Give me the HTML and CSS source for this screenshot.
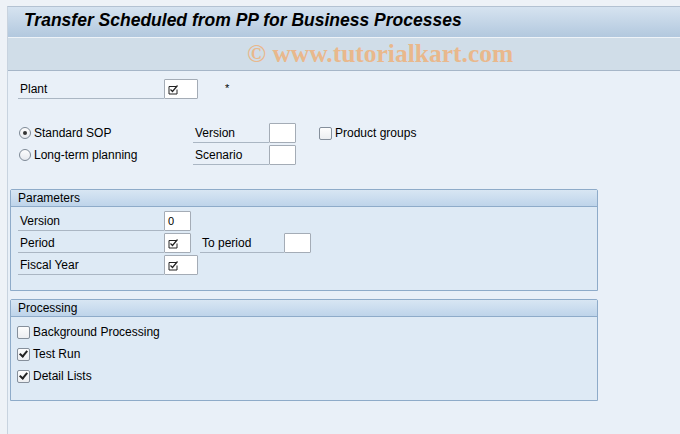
FILE: index.html
```html
<!DOCTYPE html>
<html lang="en">
<head>
  <meta charset="UTF-8" />
  <title>Transfer Scheduled from PP for Business Processes</title>
  <link rel="stylesheet" href="styles.css">
</head>
<body>
  <div class="ventana">
    <div class="titulo">Transfer Scheduled from PP for Business Processes</div>
    <div class="barra"><span class="marca">© www.tutorialkart.com</span></div>

    <div class="contenido">
      <div class="fila fila-plant">
        <span class="lbl">Plant</span>
        <span class="fld ancho">
          <svg class="req" width="11" height="11" viewBox="0 0 11 11"><path d="M1 2.5h7M1 2.5v7.5h8v-4.5" fill="none" stroke="#222" stroke-width="1"/><path d="M2.5 5.5l2 2 5-6" fill="none" stroke="#222" stroke-width="1.2"/></svg>
        </span>
        <span class="ast">*</span>
      </div>

      <div class="bloque-sop">
        <div class="fila">
          <span class="opcion"><span class="radio on"></span>Standard SOP</span>
          <span class="lbl corto">Version</span>
          <span class="fld"></span>
          <span class="opcion suelta"><span class="check"></span>Product groups</span>
        </div>
        <div class="fila">
          <span class="opcion"><span class="radio"></span>Long-term planning</span>
          <span class="lbl corto">Scenario</span>
          <span class="fld"></span>
        </div>
      </div>

      <div class="grupo">
        <div class="grupo-cab">Parameters</div>
        <div class="grupo-cuerpo">
          <div class="fila">
            <span class="lbl">Version</span>
            <span class="fld valor">0</span>
          </div>
          <div class="fila">
            <span class="lbl">Period</span>
            <span class="fld">
              <svg class="req" width="11" height="11" viewBox="0 0 11 11"><path d="M1 2.5h7M1 2.5v7.5h8v-4.5" fill="none" stroke="#222" stroke-width="1"/><path d="M2.5 5.5l2 2 5-6" fill="none" stroke="#222" stroke-width="1.2"/></svg>
            </span>
            <span class="lbl hasta">To period</span>
            <span class="fld"></span>
          </div>
          <div class="fila">
            <span class="lbl">Fiscal Year</span>
            <span class="fld ancho">
              <svg class="req" width="11" height="11" viewBox="0 0 11 11"><path d="M1 2.5h7M1 2.5v7.5h8v-4.5" fill="none" stroke="#222" stroke-width="1"/><path d="M2.5 5.5l2 2 5-6" fill="none" stroke="#222" stroke-width="1.2"/></svg>
            </span>
          </div>
        </div>
      </div>

      <div class="grupo">
        <div class="grupo-cab">Processing</div>
        <div class="grupo-cuerpo procesos">
          <div class="fila"><span class="opcion"><span class="check"></span>Background Processing</span></div>
          <div class="fila"><span class="opcion"><span class="check on"></span>Test Run</span></div>
          <div class="fila"><span class="opcion"><span class="check on"></span>Detail Lists</span></div>
        </div>
      </div>
    </div>
  </div>
</body>
</html>
```

FILE: styles.css
```css
html, body {
  margin: 0;
  height: 100%;
}
body {
  font-family: "Liberation Sans", Arial, sans-serif;
  font-size: 12px;
  color: #000;
  background: #eef2f7;
  padding: 6px 0 0 7px;
  box-sizing: border-box;
  overflow: hidden;
}
.ventana {
  height: 100%;
  border-top: 1px solid #b4c2d2;
  border-left: 1px solid #c8d3df;
  background: #e9f0f8;
}
.titulo {
  height: 30px;
  line-height: 27px;
  padding-left: 16px;
  font-size: 17.5px;
  font-weight: bold;
  font-style: italic;
  background: linear-gradient(#d6e3f0, #b2c8de);
  border-bottom: 1px solid #eef3f8;
}
.barra {
  height: 32px;
  background: #d0dde8;
  border-bottom: 1px solid #a6b6c8;
  display: flex;
  align-items: center;
  padding-left: 239px;
}
.marca {
  font-family: "Liberation Serif", "Times New Roman", serif;
  font-weight: bold;
  font-size: 25.5px;
  color: #e9b88c;
}
.contenido {
  padding: 8px 0 0 2px;
}
.fila {
  display: flex;
  height: 20px;
  margin-bottom: 2px;
}
.fila-plant {
  margin-left: 8px;
  margin-bottom: 24px;
}
.lbl {
  width: 146px;
  padding-left: 2px;
  line-height: 20px;
  border-bottom: 1px solid #aab6c3;
  box-sizing: border-box;
}
.lbl.corto {
  width: 76px;
  padding-left: 2px;
}
.lbl.hasta {
  width: 84px;
  margin-left: 9px;
}
.fld {
  width: 27px;
  height: 20px;
  box-sizing: border-box;
  border: 1px solid #a4acb6;
  border-radius: 1px;
  background: #fff;
  display: flex;
  align-items: center;
  padding-left: 3px;
}
.fld.ancho {
  width: 34px;
}
.fld.valor {
  font-size: 11px;
}
.req {
  display: block;
}
.ast {
  margin-left: 27px;
  line-height: 18px;
  font-size: 11px;
}
.bloque-sop {
  margin-left: 9px;
  margin-bottom: 24px;
}
.bloque-sop .opcion {
  width: 174px;
}
.opcion {
  display: flex;
  align-items: center;
  gap: 3px;
  line-height: 20px;
}
.opcion.suelta {
  margin-left: 23px;
}
.radio {
  width: 10px;
  height: 10px;
  border: 1px solid #7e8996;
  border-radius: 50%;
  background: linear-gradient(#fdfdfd, #e6e9ee);
  display: inline-flex;
  align-items: center;
  justify-content: center;
}
.radio.on::after {
  content: "";
  width: 4px;
  height: 4px;
  border-radius: 50%;
  background: #333;
}
.check {
  width: 11px;
  height: 11px;
  border: 1px solid #858f9b;
  border-radius: 2px;
  background: linear-gradient(#fdfdfd, #eceef1);
  display: inline-flex;
  align-items: center;
  justify-content: center;
}
.check.on::after {
  content: "";
  width: 3px;
  height: 6px;
  border: solid #222;
  border-width: 0 2px 2px 0;
  transform: rotate(40deg);
  margin-top: -2px;
}
.grupo {
  width: 586px;
  margin-bottom: 8px;
  border: 1px solid #8eabc9;
  border-radius: 2px 2px 0 0;
  background: #deeaf5;
}
.grupo-cab {
  height: 16px;
  line-height: 16px;
  padding-left: 7px;
  background: linear-gradient(#d8e6f3, #bed4ea);
  border-bottom: 1px solid #8eabc9;
}
.grupo-cuerpo {
  padding: 4px 0 15px 7px;
  height: 64px;
}
.grupo-cuerpo.procesos {
  padding: 5px 0 15px 6px;
  height: 63px;
}
```
